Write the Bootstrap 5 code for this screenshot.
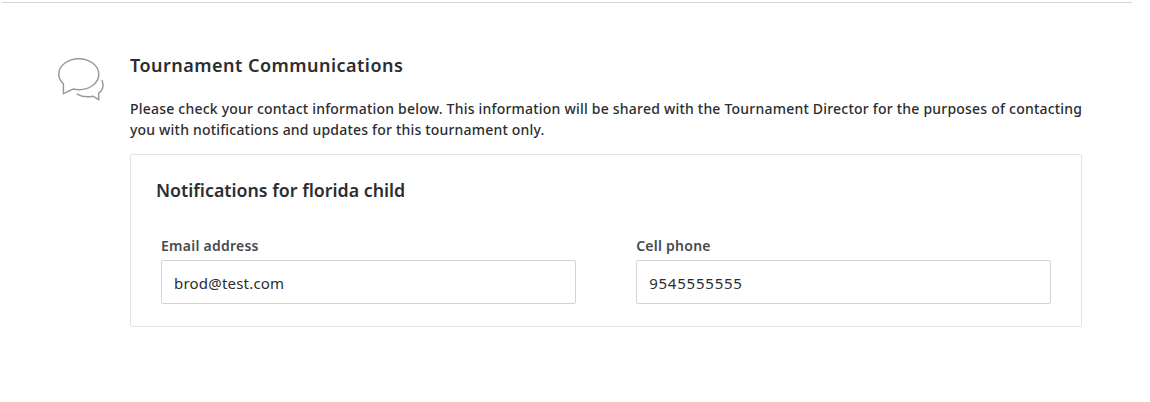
<!DOCTYPE html>
<html lang="en">
<head>
<meta charset="utf-8">
<meta name="viewport" content="width=device-width, initial-scale=1">
<title>Tournament Communications</title>
<link href="https://cdn.jsdelivr.net/npm/bootstrap@5.3.0/dist/css/bootstrap.min.css" rel="stylesheet">
<style>
body{font-family:"Noto Sans",sans-serif;color:#2b2d30;background:#fff;font-size:14px;line-height:21px;overflow:hidden}
.page-wrap{width:1130px;margin-left:2px;padding-top:2px}
.rule-top{border-top:1px solid #d4d4d4}
.section-body{padding:50px 50px 0 55px}
.chat-icon{width:50px;height:50px;margin:1px 23px 0 0}
.section-title,.panel-title{font-size:18px;line-height:24px;font-weight:600;margin:0}
.section-title{letter-spacing:.48px}
.panel-title{font-size:17.8px}
.intro{margin:21px 0 14px;font-weight:500;white-space:nowrap}
.line-one{letter-spacing:.213px}
.line-two{letter-spacing:.19px}
.contact-panel{border:1px solid #e1e4ea;border-radius:2px;height:173px;padding:23px 30px 0 25px}
.fields{margin:34px 0 0 5px;gap:60px}
.field-label{font-weight:600;color:#484b4f;line-height:20px;margin:0 0 4px;display:block;letter-spacing:.25px}
.form-control.field-input{height:44px;border:1px solid #d4d4d4;border-radius:2px;padding:1px 12px 0;font-size:15px;line-height:22px;color:#2b2d30}
#email{letter-spacing:.2px}
#phone{letter-spacing:.78px}
</style>
</head>
<body>
<main class="page-wrap">
  <div class="rule-top"></div>
  <section class="section-body d-flex">
    <svg class="chat-icon flex-shrink-0" viewBox="0 0 50 50" fill="none" stroke="#999" stroke-width="1.5" stroke-linejoin="miter" stroke-linecap="round" aria-hidden="true">
      <path d="M6.400 39.600V29.800C3.600 27.400 1.800 24.200 1.800 20.300C1.800 11.700 10.800 4.700 21.800 4.700S41.800 11.700 41.800 20.300S32.900 35.700 21.900 35.700C19.800 35.700 18.200 35.500 16.200 35.100Z"/>
      <path d="M45.200 26.700C46.900 31.800 45.500 36.500 41.700 39.200V45.700L36 42.200C30.100 43.400 24.300 42.600 20.200 40.100"/>
    </svg>
    <div class="flex-grow-1">
      <h1 class="section-title"><span>Tournament Communications</span></h1>
      <p class="intro"><span class="line-one">Please check your contact information below. This information will be shared with the Tournament Director for the purposes of contacting</span><br><span class="line-two">you with notifications and updates for this tournament only.</span></p>
      <div class="contact-panel">
        <h2 class="panel-title"><span>Notifications for florida child</span></h2>
        <form class="fields d-flex">
          <div class="flex-fill">
            <label class="field-label" for="email">Email address</label>
            <input class="form-control field-input" id="email" type="text" value="brod@test.com">
          </div>
          <div class="flex-fill">
            <label class="field-label" for="phone">Cell phone</label>
            <input class="form-control field-input" id="phone" type="text" value="9545555555">
          </div>
        </form>
      </div>
    </div>
  </section>
</main>
<script src="https://cdn.jsdelivr.net/npm/bootstrap@5.3.0/dist/js/bootstrap.bundle.min.js"></script>
</body>
</html>
